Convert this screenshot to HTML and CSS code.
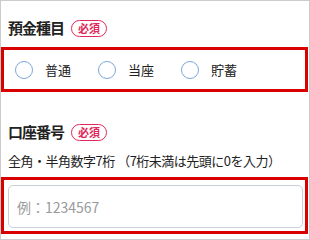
FILE: index.html
```html
<html>
  <head>
    <title>口座情報</title>
    <meta name="viewport" content="width=device-width, initial-scale=1">
    <link rel="stylesheet" href="styles.css">
  </head>
  <body>
    <div class="frame">
      <div class="field first">
        <div class="field-title">預金種目 <span class="badge">必須</span></div>
        <div class="marked radios">
          <label class="radio"><span class="circle"></span>普通</label>
          <label class="radio"><span class="circle"></span>当座</label>
          <label class="radio"><span class="circle"></span>貯蓄</label>
        </div>
      </div>
      <div class="field second">
        <div class="field-title">口座番号 <span class="badge">必須</span></div>
        <div class="hint">全角・半角数字7桁 （7桁未満は先頭に0を入力）</div>
        <div class="marked input-wrap">
          <input class="text-input" type="text" placeholder="例：1234567">
        </div>
      </div>
    </div>
  </body>
</html>
```

FILE: styles.css
```css
* { box-sizing: border-box; }
body {
  margin: 0;
  font-family: "Noto Sans CJK JP", "Noto Sans", sans-serif;
  color: #222;
  background: #fff;
}

.frame {
  width: 310px;
  height: 240px;
  border: 1px solid #ccc;
  overflow: hidden;
}

.field.first {
  padding-top: 19px;
}

.field.second {
  padding-top: 32px;
}

.field-title {
  display: flex;
  align-items: center;
  gap: 7px;
  margin-left: 7px;
  height: 16px;
  font-size: 15px;
  font-weight: bold;
  line-height: 16px;
  letter-spacing: -1px;
}

.badge {
  display: inline-block;
  height: 17px;
  padding: 0 6px;
  border: 1px solid #e0285a;
  border-radius: 9px;
  color: #e0285a;
  font-size: 11px;
  font-weight: bold;
  line-height: 15px;
  letter-spacing: 0;
}

.marked {
  border: 3px solid #d90000;
  margin-right: 1px;
}

.radios {
  display: flex;
  align-items: center;
  gap: 27px;
  height: 45px;
  margin-top: 11px;
  padding-left: 11px;
}

.radio {
  display: flex;
  align-items: center;
  gap: 12px;
  font-size: 13px;
}

.circle {
  width: 18px;
  height: 18px;
  border: 1px solid #7aa8dc;
  border-radius: 50%;
}

.hint {
  margin: 12px 0 0 7px;
  font-size: 13px;
  line-height: 18px;
  letter-spacing: -0.5px;
  white-space: nowrap;
}

.input-wrap {
  margin-top: 7px;
  padding: 5px 2px 3px 4px;
}

.text-input {
  display: block;
  width: 100%;
  height: 43px;
  border: 1px solid #c9cfd9;
  border-radius: 5px;
  padding: 0 8px;
  font-family: inherit;
  font-size: 14px;
}

.text-input::placeholder {
  color: #9a9a9a;
}
```
